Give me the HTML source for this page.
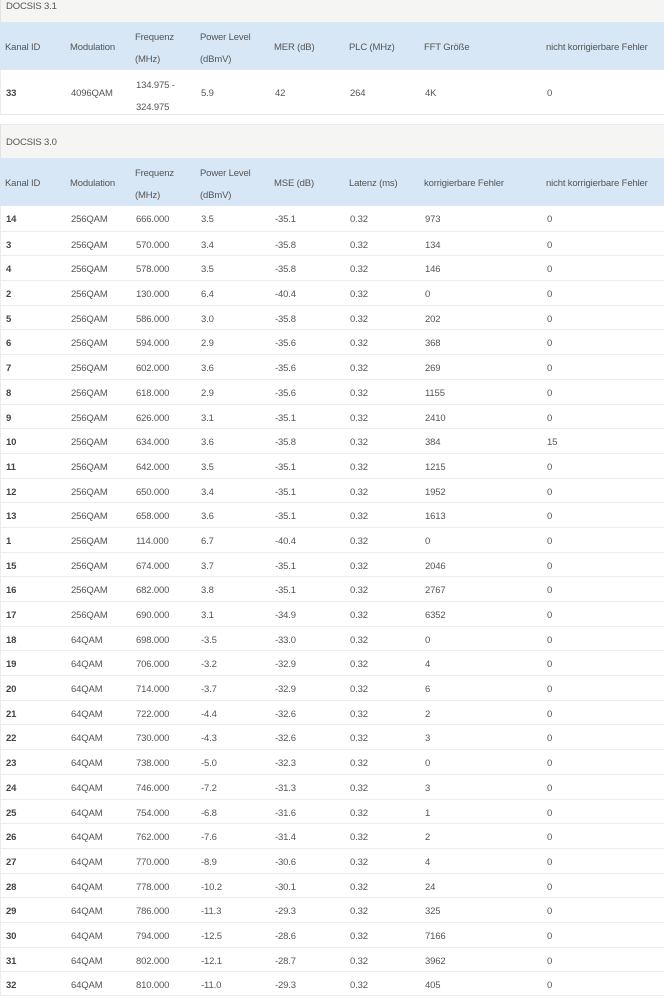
<!DOCTYPE html>
<html><head><meta charset="utf-8"><style>
*{margin:0;padding:0;box-sizing:border-box}
body{width:664px;height:999px;overflow:hidden;background:#fff;font-family:"Liberation Sans",sans-serif;font-size:9.5px;letter-spacing:-0.15px;color:#555}
.cap{position:absolute;left:0;width:664px;background:#f5f5f3;border-left:1px solid #e2e2e2;padding-left:5px}
.hd{position:absolute;left:0;width:664px;background:#d7e7f5;height:48px}
.r{position:relative;height:24.7px;border-top:1px solid #ececec;border-left:1px solid #ececec}
.r span,.hd span{position:absolute;top:2px;line-height:24px}
.hd span{line-height:22px;top:5px}
.hd span.one{top:15px}
.c1{left:5px;font-weight:bold;color:#444}.hd .c1{font-weight:normal;color:#555}
.c2{left:70px}.c3{left:135px}.c4{left:200px}.c5{left:274px}.c6{left:349px}.c7{left:424px}.c8{left:546px}
</style></head><body>
<div class="cap" style="top:0;height:22px;line-height:14px">DOCSIS 3.1</div>
<div class="hd" style="top:22px"><span class="c1 one">Kanal ID</span><span class="c2 one">Modulation</span><span class="c3">Frequenz<br>(MHz)</span><span class="c4">Power Level<br>(dBmV)</span><span class="c5 one">MER (dB)</span><span class="c6 one">PLC (MHz)</span><span class="c7 one">FFT Größe</span><span class="c8 one">nicht korrigierbare Fehler</span></div>
<div style="position:absolute;top:70px;left:0;width:664px;height:45px;border-left:1px solid #ececec;border-bottom:1px solid #e6e6e6">
<span style="position:absolute;left:5px;top:18px;font-weight:bold;color:#444">33</span><span style="position:absolute;left:70px;top:18px">4096QAM</span><span style="position:absolute;left:135px;top:5px;line-height:22px">134.975 -<br>324.975</span><span style="position:absolute;left:200px;top:18px">5.9</span><span style="position:absolute;left:274px;top:18px">42</span><span style="position:absolute;left:349px;top:18px">264</span><span style="position:absolute;left:424px;top:18px">4K</span><span style="position:absolute;left:546px;top:18px">0</span></div>
<div class="cap" style="top:124px;height:34px;line-height:36px;border-top:1px solid #ececec">DOCSIS 3.0</div>
<div class="hd" style="top:158px"><span class="c1 one">Kanal ID</span><span class="c2 one">Modulation</span><span class="c3">Frequenz<br>(MHz)</span><span class="c4">Power Level<br>(dBmV)</span><span class="c5 one">MSE (dB)</span><span class="c6 one">Latenz (ms)</span><span class="c7 one">korrigierbare Fehler</span><span class="c8 one">nicht korrigierbare Fehler</span></div>
<div style="position:absolute;top:206px;left:0;width:664px">
<div class="r" style="border-top:none"><span class="c1">14</span><span class="c2">256QAM</span><span class="c3">666.000</span><span class="c4">3.5</span><span class="c5">-35.1</span><span class="c6">0.32</span><span class="c7">973</span><span class="c8">0</span></div>
<div class="r"><span class="c1">3</span><span class="c2">256QAM</span><span class="c3">570.000</span><span class="c4">3.4</span><span class="c5">-35.8</span><span class="c6">0.32</span><span class="c7">134</span><span class="c8">0</span></div>
<div class="r"><span class="c1">4</span><span class="c2">256QAM</span><span class="c3">578.000</span><span class="c4">3.5</span><span class="c5">-35.8</span><span class="c6">0.32</span><span class="c7">146</span><span class="c8">0</span></div>
<div class="r"><span class="c1">2</span><span class="c2">256QAM</span><span class="c3">130.000</span><span class="c4">6.4</span><span class="c5">-40.4</span><span class="c6">0.32</span><span class="c7">0</span><span class="c8">0</span></div>
<div class="r"><span class="c1">5</span><span class="c2">256QAM</span><span class="c3">586.000</span><span class="c4">3.0</span><span class="c5">-35.8</span><span class="c6">0.32</span><span class="c7">202</span><span class="c8">0</span></div>
<div class="r"><span class="c1">6</span><span class="c2">256QAM</span><span class="c3">594.000</span><span class="c4">2.9</span><span class="c5">-35.6</span><span class="c6">0.32</span><span class="c7">368</span><span class="c8">0</span></div>
<div class="r"><span class="c1">7</span><span class="c2">256QAM</span><span class="c3">602.000</span><span class="c4">3.6</span><span class="c5">-35.6</span><span class="c6">0.32</span><span class="c7">269</span><span class="c8">0</span></div>
<div class="r"><span class="c1">8</span><span class="c2">256QAM</span><span class="c3">618.000</span><span class="c4">2.9</span><span class="c5">-35.6</span><span class="c6">0.32</span><span class="c7">1155</span><span class="c8">0</span></div>
<div class="r"><span class="c1">9</span><span class="c2">256QAM</span><span class="c3">626.000</span><span class="c4">3.1</span><span class="c5">-35.1</span><span class="c6">0.32</span><span class="c7">2410</span><span class="c8">0</span></div>
<div class="r"><span class="c1">10</span><span class="c2">256QAM</span><span class="c3">634.000</span><span class="c4">3.6</span><span class="c5">-35.8</span><span class="c6">0.32</span><span class="c7">384</span><span class="c8">15</span></div>
<div class="r"><span class="c1">11</span><span class="c2">256QAM</span><span class="c3">642.000</span><span class="c4">3.5</span><span class="c5">-35.1</span><span class="c6">0.32</span><span class="c7">1215</span><span class="c8">0</span></div>
<div class="r"><span class="c1">12</span><span class="c2">256QAM</span><span class="c3">650.000</span><span class="c4">3.4</span><span class="c5">-35.1</span><span class="c6">0.32</span><span class="c7">1952</span><span class="c8">0</span></div>
<div class="r"><span class="c1">13</span><span class="c2">256QAM</span><span class="c3">658.000</span><span class="c4">3.6</span><span class="c5">-35.1</span><span class="c6">0.32</span><span class="c7">1613</span><span class="c8">0</span></div>
<div class="r"><span class="c1">1</span><span class="c2">256QAM</span><span class="c3">114.000</span><span class="c4">6.7</span><span class="c5">-40.4</span><span class="c6">0.32</span><span class="c7">0</span><span class="c8">0</span></div>
<div class="r"><span class="c1">15</span><span class="c2">256QAM</span><span class="c3">674.000</span><span class="c4">3.7</span><span class="c5">-35.1</span><span class="c6">0.32</span><span class="c7">2046</span><span class="c8">0</span></div>
<div class="r"><span class="c1">16</span><span class="c2">256QAM</span><span class="c3">682.000</span><span class="c4">3.8</span><span class="c5">-35.1</span><span class="c6">0.32</span><span class="c7">2767</span><span class="c8">0</span></div>
<div class="r"><span class="c1">17</span><span class="c2">256QAM</span><span class="c3">690.000</span><span class="c4">3.1</span><span class="c5">-34.9</span><span class="c6">0.32</span><span class="c7">6352</span><span class="c8">0</span></div>
<div class="r"><span class="c1">18</span><span class="c2">64QAM</span><span class="c3">698.000</span><span class="c4">-3.5</span><span class="c5">-33.0</span><span class="c6">0.32</span><span class="c7">0</span><span class="c8">0</span></div>
<div class="r"><span class="c1">19</span><span class="c2">64QAM</span><span class="c3">706.000</span><span class="c4">-3.2</span><span class="c5">-32.9</span><span class="c6">0.32</span><span class="c7">4</span><span class="c8">0</span></div>
<div class="r"><span class="c1">20</span><span class="c2">64QAM</span><span class="c3">714.000</span><span class="c4">-3.7</span><span class="c5">-32.9</span><span class="c6">0.32</span><span class="c7">6</span><span class="c8">0</span></div>
<div class="r"><span class="c1">21</span><span class="c2">64QAM</span><span class="c3">722.000</span><span class="c4">-4.4</span><span class="c5">-32.6</span><span class="c6">0.32</span><span class="c7">2</span><span class="c8">0</span></div>
<div class="r"><span class="c1">22</span><span class="c2">64QAM</span><span class="c3">730.000</span><span class="c4">-4.3</span><span class="c5">-32.6</span><span class="c6">0.32</span><span class="c7">3</span><span class="c8">0</span></div>
<div class="r"><span class="c1">23</span><span class="c2">64QAM</span><span class="c3">738.000</span><span class="c4">-5.0</span><span class="c5">-32.3</span><span class="c6">0.32</span><span class="c7">0</span><span class="c8">0</span></div>
<div class="r"><span class="c1">24</span><span class="c2">64QAM</span><span class="c3">746.000</span><span class="c4">-7.2</span><span class="c5">-31.3</span><span class="c6">0.32</span><span class="c7">3</span><span class="c8">0</span></div>
<div class="r"><span class="c1">25</span><span class="c2">64QAM</span><span class="c3">754.000</span><span class="c4">-6.8</span><span class="c5">-31.6</span><span class="c6">0.32</span><span class="c7">1</span><span class="c8">0</span></div>
<div class="r"><span class="c1">26</span><span class="c2">64QAM</span><span class="c3">762.000</span><span class="c4">-7.6</span><span class="c5">-31.4</span><span class="c6">0.32</span><span class="c7">2</span><span class="c8">0</span></div>
<div class="r"><span class="c1">27</span><span class="c2">64QAM</span><span class="c3">770.000</span><span class="c4">-8.9</span><span class="c5">-30.6</span><span class="c6">0.32</span><span class="c7">4</span><span class="c8">0</span></div>
<div class="r"><span class="c1">28</span><span class="c2">64QAM</span><span class="c3">778.000</span><span class="c4">-10.2</span><span class="c5">-30.1</span><span class="c6">0.32</span><span class="c7">24</span><span class="c8">0</span></div>
<div class="r"><span class="c1">29</span><span class="c2">64QAM</span><span class="c3">786.000</span><span class="c4">-11.3</span><span class="c5">-29.3</span><span class="c6">0.32</span><span class="c7">325</span><span class="c8">0</span></div>
<div class="r"><span class="c1">30</span><span class="c2">64QAM</span><span class="c3">794.000</span><span class="c4">-12.5</span><span class="c5">-28.6</span><span class="c6">0.32</span><span class="c7">7166</span><span class="c8">0</span></div>
<div class="r"><span class="c1">31</span><span class="c2">64QAM</span><span class="c3">802.000</span><span class="c4">-12.1</span><span class="c5">-28.7</span><span class="c6">0.32</span><span class="c7">3962</span><span class="c8">0</span></div>
<div class="r" style="border-bottom:1px solid #ececec"><span class="c1">32</span><span class="c2">64QAM</span><span class="c3">810.000</span><span class="c4">-11.0</span><span class="c5">-29.3</span><span class="c6">0.32</span><span class="c7">405</span><span class="c8">0</span></div>
</div>
</body></html>
